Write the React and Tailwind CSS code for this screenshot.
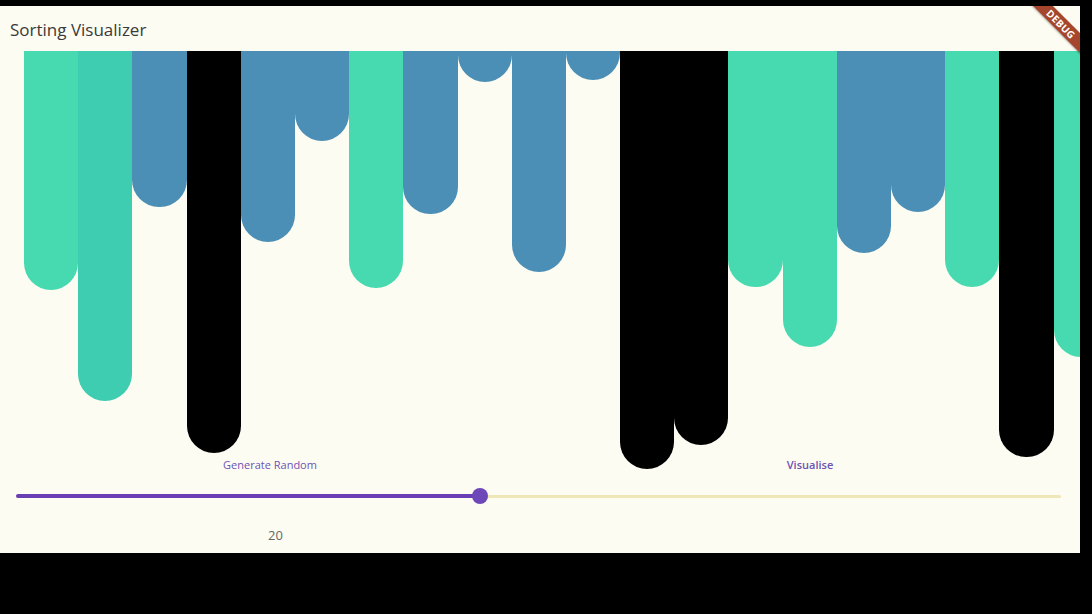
import React from 'react';

const GREEN = '#47dab0';
const GREEN2 = '#3fcdb2';
const BLUE = '#4b8fb6';
const BLACK = '#000000';

// bar bottoms measured from the top of the bar strip
const bars = [
  { h: 239, c: GREEN },
  { h: 350, c: GREEN2 },
  { h: 156, c: BLUE },
  { h: 402, c: BLACK },
  { h: 191, c: BLUE },
  { h: 90, c: BLUE },
  { h: 237, c: GREEN },
  { h: 163, c: BLUE },
  { h: 31, c: BLUE },
  { h: 221, c: BLUE },
  { h: 29, c: BLUE },
  { h: 418, c: BLACK },
  { h: 394, c: BLACK },
  { h: 236, c: GREEN },
  { h: 296, c: GREEN },
  { h: 202, c: BLUE },
  { h: 161, c: BLUE },
  { h: 236, c: GREEN },
  { h: 406, c: BLACK },
  { h: 306, c: GREEN },
];

function DebugBanner() {
  return (
    <div className="absolute right-[-43px] top-[11px] w-[124px] h-[14px] rotate-45 bg-[#a5462d] flex items-center justify-center shadow-[0_1px_2px_rgba(0,0,0,0.3)]">
      <span className="text-[10px] font-bold text-white tracking-[0.3px] leading-none">DEBUG</span>
    </div>
  );
}

export default function App() {
  const value = 20;
  const pct = 44.4;

  return (
    <div className="w-[1092px] h-[614px] bg-black pt-[6px]" style={{ fontFamily: '"Open Sans", "Noto Sans", sans-serif' }}>
      <div className="relative w-[1080px] h-[547px] bg-[#fdfcf2] overflow-hidden">
        {/* App bar */}
        <div className="h-[45px] flex items-center pl-[10px]">
          <h1 className="text-[17px] text-[#3a3a3a] font-normal leading-none pt-[2px]">Sorting Visualizer</h1>
        </div>

        {/* Bars */}
        <div className="h-[404px] flex items-start pl-[24px]">
          {bars.map((bar, idx) => (
            <div
              key={idx}
              className="shrink-0 w-[54.2px] rounded-b-[27px]"
              style={{ height: bar.h, backgroundColor: bar.c }}
            />
          ))}
        </div>

        {/* Buttons */}
        <div className="relative flex h-[20px]">
          <button className="flex-1 flex items-center justify-center text-[11px] font-medium text-[#6d53b3]">
            Generate Random
          </button>
          <button className="flex-1 flex items-center justify-center text-[11px] font-semibold text-[#6d53b3]">
            Visualise
          </button>
        </div>

        {/* Slider */}
        <div className="h-[42px] flex items-center pl-[16px] pr-[19px]">
          <div className="relative w-full h-[4px]">
            <div className="absolute inset-x-0 top-[0.5px] h-[3px] rounded-full bg-[#efe7b8]" />
            <div className="absolute left-0 top-0 h-[4px] rounded-full bg-[#6a3fb6]" style={{ width: `${pct}%` }} />
            <div
              className="absolute top-[2px] w-[16px] h-[16px] -ml-[8px] -mt-[8px] rounded-full bg-[#6d48b8]"
              style={{ left: `${pct}%` }}
            />
          </div>
        </div>

        {/* Value */}
        <div className="h-[36px] flex items-center pl-[268px] pt-[2px]">
          <span className="text-[13px] text-[#666666]">{value}</span>
        </div>

        <DebugBanner />
      </div>
    </div>
  );
}
